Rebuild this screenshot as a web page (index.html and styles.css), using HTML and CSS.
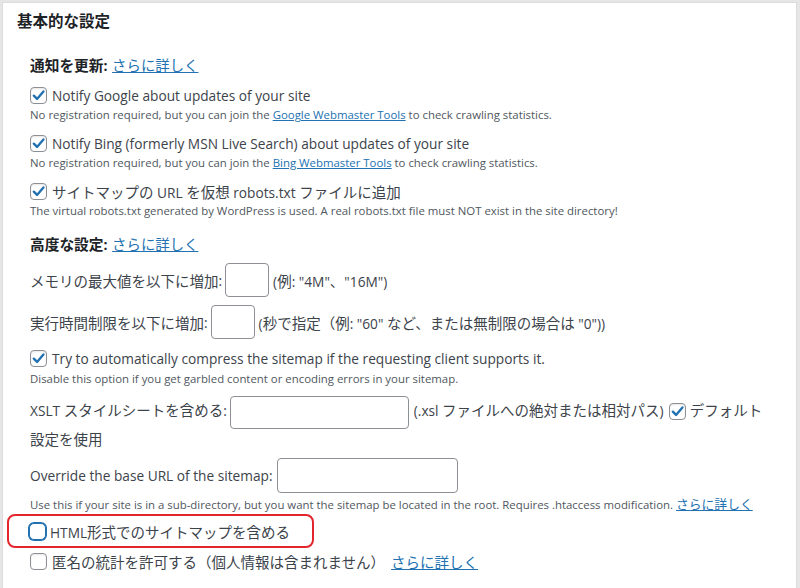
FILE: index.html
```html
<!DOCTYPE html>
<html lang="ja">
<head>
<meta charset="utf-8">
<link rel="stylesheet" href="styles.css">
</head>
<body>
<div class="panel">
  <h2 class="title">基本的な設定</h2>
  <div class="content">
    <div class="sec"><span class="ja">通知を更新</span>: <a class="ja" href="#">さらに詳しく</a></div>

    <div class="group">
      <label class="cb-row"><span class="cb checked"><svg viewBox="0 0 20 20"><path d="M4.5 10.2 L8.3 14 L15.8 5.2" /></svg></span>Notify Google about updates of your site</label>
      <div class="desc">No registration required, but you can join the <a href="#">Google Webmaster Tools</a> to check crawling statistics.</div>
    </div>

    <div class="group">
      <label class="cb-row"><span class="cb checked"><svg viewBox="0 0 20 20"><path d="M4.5 10.2 L8.3 14 L15.8 5.2" /></svg></span>Notify Bing (formerly MSN Live Search) about updates of your site</label>
      <div class="desc">No registration required, but you can join the <a href="#">Bing Webmaster Tools</a> to check crawling statistics.</div>
    </div>

    <div class="group">
      <label class="cb-row"><span class="cb checked"><svg viewBox="0 0 20 20"><path d="M4.5 10.2 L8.3 14 L15.8 5.2" /></svg></span><span class="txt"><span class="ja">サイトマップの</span> URL <span class="ja">を仮想</span> robots.txt <span class="ja">ファイルに追加</span></span></label>
      <div class="desc">The virtual robots.txt generated by WordPress is used. A real robots.txt file must NOT exist in the site directory!</div>
    </div>

    <div class="sec sec2"><span class="ja">高度な設定</span>: <a class="ja" href="#">さらに詳しく</a></div>

    <div class="field-row first"><span class="ja">メモリの最大値を以下に増加</span>:<span class="input small"></span><span class="txt">(<span class="ja">例</span>: "4M"<span class="ja">、</span>"16M")</span></div>
    <div class="field-row">
      <span class="ja">実行時間制限を以下に増加</span>:<span class="input small"></span><span class="txt">(<span class="ja">秒で指定（例</span>: "60" <span class="ja">など、または無制限の場合は</span> "0"))</span>
    </div>

    <div class="group try">
      <label class="cb-row"><span class="cb checked"><svg viewBox="0 0 20 20"><path d="M4.5 10.2 L8.3 14 L15.8 5.2" /></svg></span>Try to automatically compress the sitemap if the requesting client supports it.</label>
      <div class="desc">Disable this option if you get garbled content or encoding errors in your sitemap.</div>
    </div>

    <div class="xslt">XSLT <span class="ja">スタイルシートを含める</span>:<span class="input wide"></span>(.xsl <span class="ja">ファイルへの絶対または相対パス</span>)<span class="cb checked inline"><svg viewBox="0 0 20 20"><path d="M4.5 10.2 L8.3 14 L15.8 5.2" /></svg></span><span class="ja">デフォルト<br>設定を使用</span></div>

    <div class="field-row override">Override the base URL of the sitemap:<span class="input url"></span></div>
    <div class="desc desc-tight">Use this if your site is in a sub-directory, but you want the sitemap be located in the root. Requires .htaccess modification. <a class="ja-s" href="#">さらに詳しく</a></div>

    <div class="highlight">
      <label class="cb-row"><span class="cb focus"></span><span class="txt">HTML<span class="ja">形式でのサイトマップを含める</span></span></label>
    </div>

    <label class="cb-row last"><span class="cb"></span><span class="txt"><span class="ja">匿名の統計を許可する（個人情報は含まれません）</span><a class="ja gap-link" href="#">さらに詳しく</a></span></label>
  </div>
</div>
</body>
</html>
```

FILE: styles.css
```css
html, body {
  margin: 0;
  padding: 0;
}
body {
  background: #e6e6e6;
  width: 800px;
  height: 588px;
  overflow: hidden;
  padding: 2px 3px 0 2px;
  box-sizing: border-box;
  font-family: "Open Sans", "Noto Sans CJK JP", sans-serif;
  font-size: 13.7px;
  color: #3c434a;
}
.panel {
  background: #fff;
  border: 1px solid #dcdcde;
  border-bottom: none;
  height: 590px;
  box-sizing: border-box;
}
.ja {
  font-size: 14.5px;
}
.ja-s {
  font-size: 12.8px;
}
.title {
  margin: 8px 0 0 14px;
  font-size: 15.5px;
  line-height: 20px;
  font-weight: 700;
  color: #1d2327;
}
.content {
  padding: 0 20px 0 27px;
}
a {
  color: #2271b1;
  text-decoration: underline;
}
.sec {
  margin-top: 24px;
  font-size: 14px;
  line-height: 20px;
  font-weight: 700;
  color: #1d2327;
}
.sec .ja {
  font-size: 14.7px;
}
.sec a {
  font-weight: 400;
  margin-left: 1px;
}
.sec a.ja {
  font-size: 14.4px;
}
.sec2 {
  margin-top: 14px;
}
.group {
  margin-top: 8px;
}
.cb-row {
  display: flex;
  align-items: center;
  height: 22px;
  gap: 5px;
  white-space: nowrap;
}
.cb {
  flex: none;
  width: 17px;
  height: 17px;
  box-sizing: border-box;
  border: 1px solid #8c8f94;
  border-radius: 4px;
  background: #fff;
  display: inline-flex;
  align-items: center;
  justify-content: center;
  box-shadow: inset 0 1px 2px rgba(0,0,0,0.1);
}
.cb svg {
  width: 17px;
  height: 17px;
  overflow: visible;
}
.cb svg path {
  fill: none;
  stroke: #2271b1;
  stroke-width: 2.8;
  stroke-linecap: round;
  stroke-linejoin: round;
}
.cb.focus {
  border-color: #2271b1;
  box-shadow: 0 0 0 1px #2271b1;
  border-radius: 5px;
}
.desc {
  font-size: 11.4px;
  line-height: 18px;
  color: #50575e;
  white-space: nowrap;
}
.field-row {
  display: flex;
  align-items: center;
  height: 34px;
  margin-top: 8px;
  white-space: nowrap;
}
.input {
  display: inline-block;
  box-sizing: border-box;
  border: 1px solid #8c8f94;
  border-radius: 4px;
  background: #fff;
  height: 34px;
  flex: none;
}
.input.small {
  width: 44px;
  margin: 0 4px 0 3px;
}
.try {
  margin-top: 8px;
}
.try .desc {
  line-height: 20px;
}
.xslt {
  margin-top: 7px;
  line-height: 22px;
  width: 745px;
  white-space: nowrap;
}
.xslt .input.wide {
  width: 179px;
  height: 33px;
  vertical-align: middle;
  margin: 0 5px 0 3px;
}
.xslt .cb.inline {
  vertical-align: middle;
  margin: 0 4px 0 5px;
  position: relative;
  top: -1px;
}
.override {
  margin-top: 7px;
  height: 35px;
}
.input.url {
  width: 181px;
  height: 35px;
  margin-left: 4px;
}
.desc-tight {
  margin-top: 2px;
}
.highlight {
  margin: 0 0 0 -23px;
  width: 307px;
  height: 34px;
  box-sizing: border-box;
  border: 2px solid #e3262c;
  border-radius: 8px;
  padding-left: 20px;
  display: flex;
  align-items: center;
}
.highlight .cb-row {
  height: 30px;
  gap: 4px;
}
.last {
  margin-top: 2px;
}
.gap-link {
  margin-left: 6px;
}
```
